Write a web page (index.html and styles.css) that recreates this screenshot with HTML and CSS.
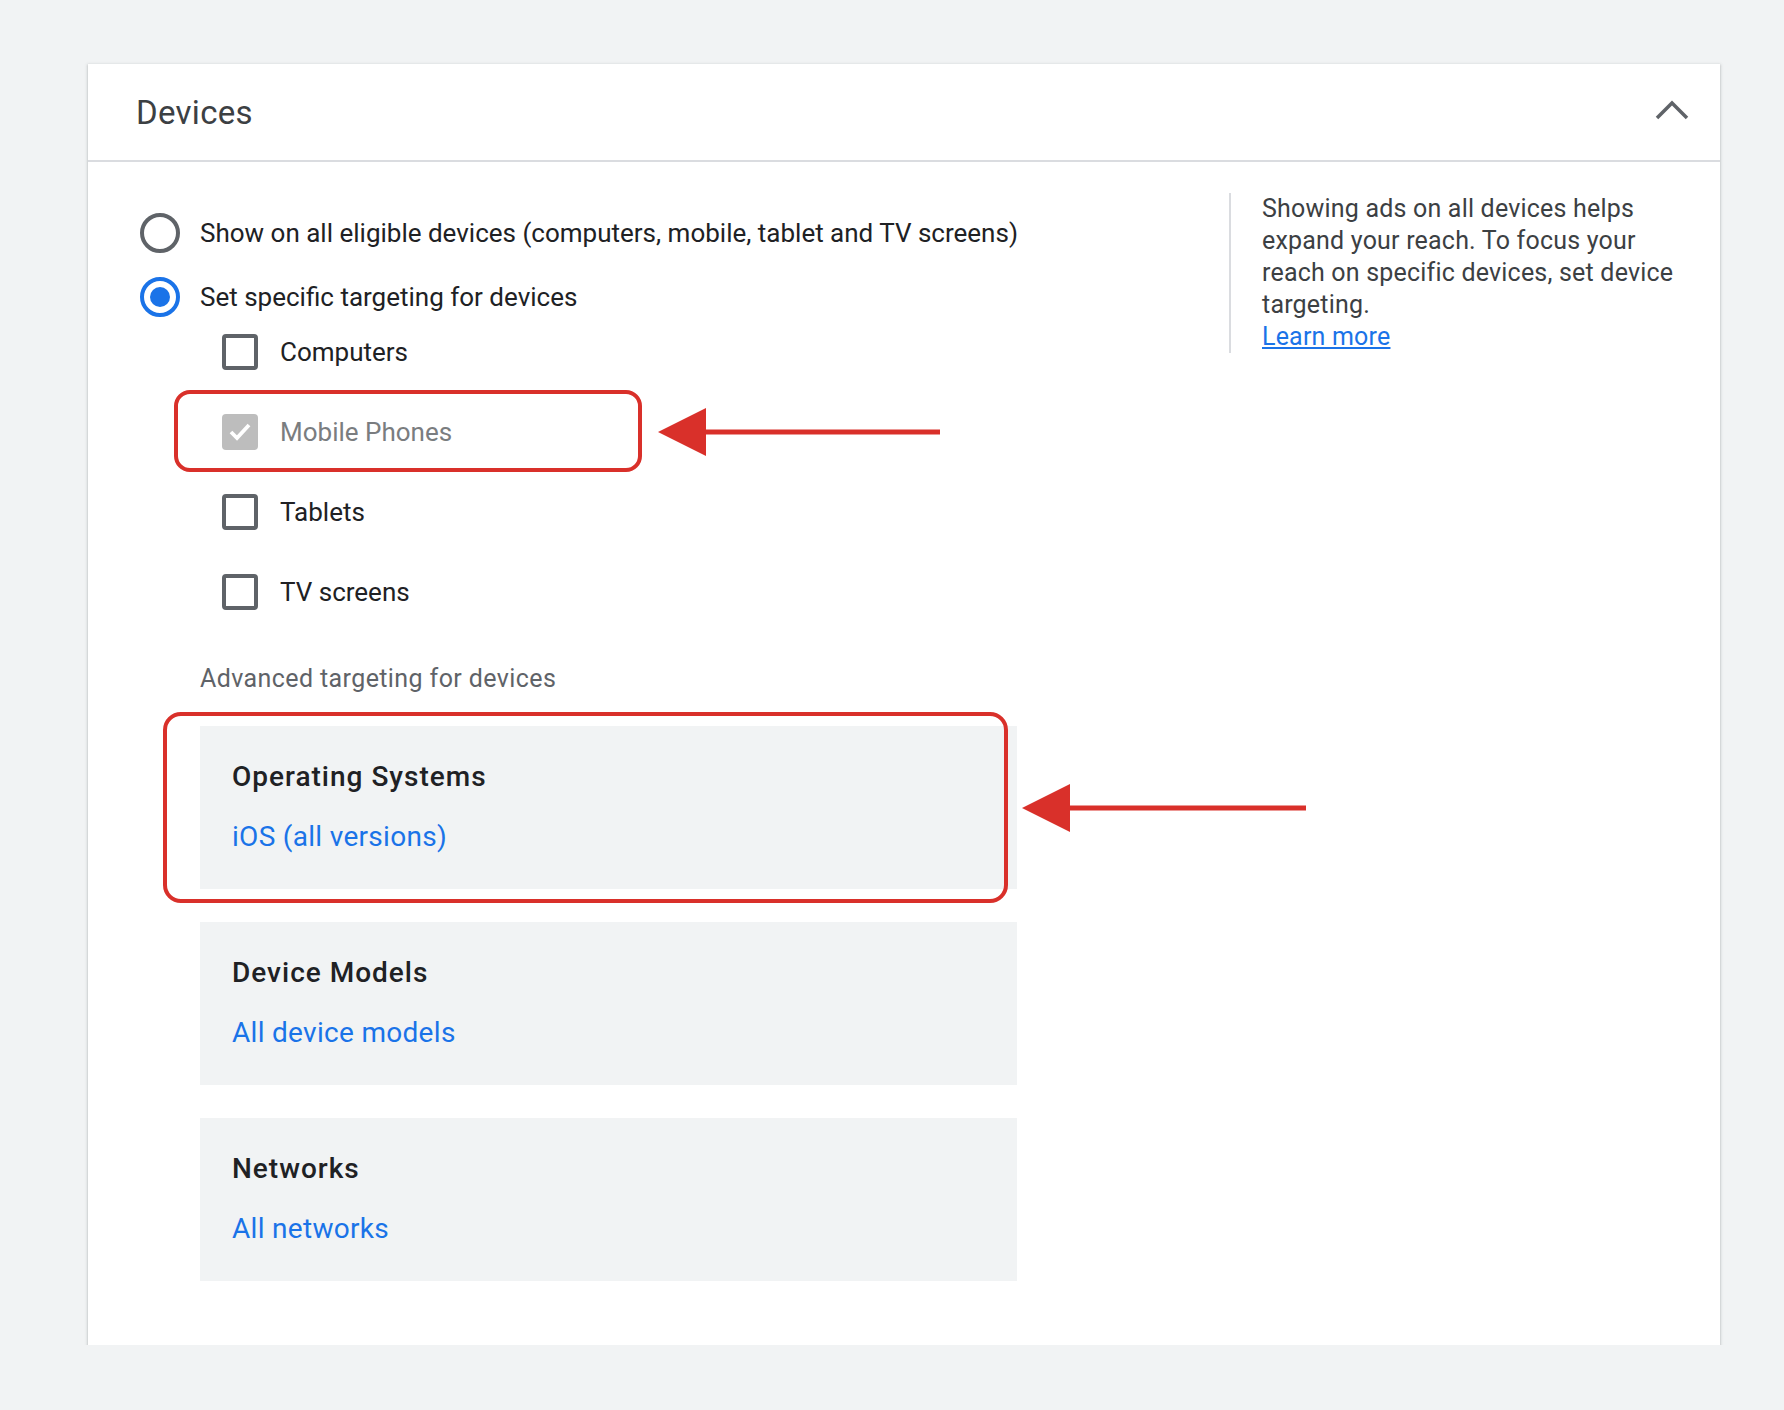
FILE: index.html
```html
<!DOCTYPE html>
<html lang="en">
<head>
  <meta charset="UTF-8" />
  <title>Devices</title>
  <link rel="stylesheet" href="styles.css">
</head>
<body>
  <div class="card">
    <div class="card-header">
      <h2>Devices</h2>
      <svg class="chevron" width="34" height="22" viewBox="0 0 34 22">
        <polyline points="2,19 17,4 32,19" fill="none" stroke="#5f6368" stroke-width="3.5" />
      </svg>
    </div>

    <div class="card-body">
      <div class="options">
        <label class="radio-row">
          <span class="radio"></span>
          Show on all eligible devices (computers, mobile, tablet and TV screens)
        </label>
        <label class="radio-row">
          <span class="radio checked"></span>
          Set specific targeting for devices
        </label>

        <div class="device-list">
          <label class="check-row">
            <span class="checkbox"></span>
            Computers
          </label>
          <label class="check-row disabled">
            <span class="checkbox marked">
              <svg width="28" height="28" viewBox="0 0 28 28">
                <polyline points="5,14 11,20 23,7" fill="none" stroke="#fff" stroke-width="3.8" />
              </svg>
            </span>
            Mobile Phones
            <!-- annotation -->
            <span class="mark-box small"></span>
            <svg class="mark-arrow small" width="282" height="50" viewBox="0 0 282 50">
              <polygon points="0,25 48,1 48,49" fill="#d9302a" />
              <rect x="46" y="22.5" width="236" height="5" fill="#d9302a" />
            </svg>
          </label>
          <label class="check-row">
            <span class="checkbox"></span>
            Tablets
          </label>
          <label class="check-row">
            <span class="checkbox"></span>
            TV screens
          </label>
        </div>

        <div class="adv-label">Advanced targeting for devices</div>

        <div class="adv-list">
          <div class="adv-box">
            <div class="adv-title">Operating Systems</div>
            <a class="adv-link">iOS (all versions)</a>
            <span class="mark-box large"></span>
            <svg class="mark-arrow large" width="284" height="50" viewBox="0 0 284 50">
              <polygon points="0,25 48,1 48,49" fill="#d9302a" />
              <rect x="46" y="22.5" width="238" height="5" fill="#d9302a" />
            </svg>
          </div>
          <div class="adv-box">
            <div class="adv-title">Device Models</div>
            <a class="adv-link">All device models</a>
          </div>
          <div class="adv-box">
            <div class="adv-title">Networks</div>
            <a class="adv-link">All networks</a>
          </div>
        </div>
      </div>

      <div class="side-note">
        Showing ads on all devices helps expand your reach. To focus your reach on specific devices, set device targeting.
        <a class="learn-more">Learn more</a>
      </div>
    </div>
  </div>
</body>
</html>
```

FILE: styles.css
```css
body {
  margin: 0;
  background-color: #f1f3f4;
  font-family: Roboto, 'Liberation Sans', sans-serif;
  color: #202124;
}
.card {
  margin: 64px 0 0 88px;
  width: 1632px;
  background-color: #fff;
  box-shadow: 0 1px 2px rgba(60, 64, 67, 0.25), 0 1px 3px 1px rgba(60, 64, 67, 0.12);
  padding-bottom: 64px;
}
.card-header {
  height: 96px;
  border-bottom: 2px solid #dadce0;
  display: flex;
  align-items: center;
  justify-content: space-between;
  padding: 0 31px 0 48px;
}
.card-header h2 {
  margin: 0;
  font-size: 33px;
  font-weight: 400;
  letter-spacing: 0.3px;
  color: #3c4043;
}
.chevron {
  margin-top: -4px;
}
.card-body {
  display: flex;
  align-items: flex-start;
  padding: 31px 30px 0 52px;
}
.options {
  flex: 1;
  padding-top: 20px;
}
.radio-row {
  display: flex;
  align-items: center;
  gap: 20px;
  height: 40px;
  font-size: 26px;
  margin-bottom: 24px;
}
.radio {
  width: 40px;
  height: 40px;
  box-sizing: border-box;
  border: 4px solid #5f6368;
  border-radius: 50%;
  display: flex;
  align-items: center;
  justify-content: center;
}
.radio.checked {
  border-color: #1a73e8;
}
.radio.checked::after {
  content: '';
  width: 20px;
  height: 20px;
  border-radius: 50%;
  background-color: #1a73e8;
}
.device-list {
  margin-top: -7px;
  padding-left: 82px;
  display: flex;
  flex-direction: column;
  gap: 44px;
}
.check-row {
  position: relative;
  display: flex;
  align-items: center;
  gap: 22px;
  height: 36px;
  font-size: 26px;
}
.checkbox {
  width: 36px;
  height: 36px;
  box-sizing: border-box;
  border: 4px solid #5f6368;
  border-radius: 4px;
  display: flex;
  align-items: center;
  justify-content: center;
}
.checkbox.marked {
  border: none;
  background-color: #bdbdbd;
}
.check-row.disabled {
  color: #7a7d80;
}
.mark-box {
  position: absolute;
  box-sizing: border-box;
  border: 4px solid #d9302a;
  border-radius: 16px;
}
.mark-box.small {
  left: -48px;
  top: -24px;
  width: 468px;
  height: 82px;
}
.mark-arrow {
  position: absolute;
}
.mark-arrow.small {
  left: 436px;
  top: -7px;
}
.adv-label {
  margin-top: 53px;
  padding-left: 60px;
  font-size: 25px;
  letter-spacing: 0.4px;
  line-height: 32px;
  color: #5f6368;
}
.adv-list {
  margin: 31px 0 0 60px;
  width: 817px;
  display: flex;
  flex-direction: column;
  gap: 33px;
}
.adv-box {
  position: relative;
  background-color: #f1f3f4;
  padding: 32px 32px 33px;
  height: 163px;
  box-sizing: border-box;
}
.adv-title {
  font-size: 28px;
  font-weight: 500;
  letter-spacing: 1px;
  line-height: 38px;
  margin-bottom: 22px;
  color: #202124;
}
.adv-link {
  display: block;
  font-size: 28px;
  letter-spacing: 0.3px;
  line-height: 38px;
  color: #1a73e8;
}
.mark-box.large {
  left: -37px;
  top: -14px;
  width: 845px;
  height: 191px;
  border-radius: 18px;
}
.mark-arrow.large {
  left: 822px;
  top: 57px;
}
.side-note {
  width: 428px;
  border-left: 2px solid #dadce0;
  padding-left: 31px;
  font-size: 25px;
  letter-spacing: 0.2px;
  line-height: 32px;
  color: #3c4043;
}
.learn-more {
  display: block;
  color: #1a73e8;
  text-decoration: underline;
}
```
